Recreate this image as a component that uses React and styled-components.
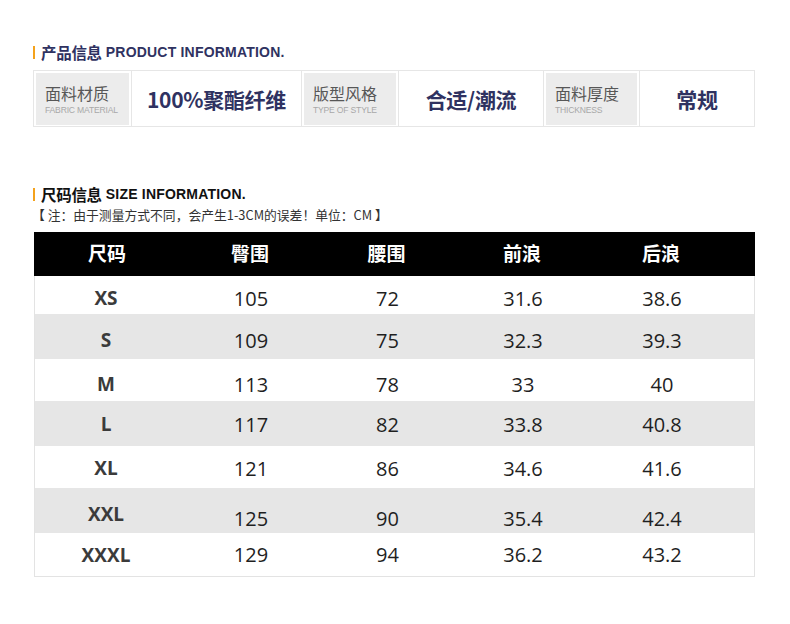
import { createGlobalStyle, styled } from "styled-components";

const GlobalStyle = createGlobalStyle`
  html, body {
    margin: 0;
    padding: 0;
    background: #ffffff;
  }
  body {
    font-family: "Noto Sans CJK SC", "Noto Sans", sans-serif;
  }
`;

const Page = styled.div`
  width: 790px;
  height: 624px;
  box-sizing: border-box;
  padding: 46px 35px 0 33px;
`;

const SectionTitle = styled.div`
  display: flex;
  align-items: center;
  height: 13px;
  line-height: 13px;
  border-left: 2px solid #f4a21c;
  padding-left: 6px;
  margin-top: ${(p) => p.$top || 0}px;
  color: ${(p) => p.$color};
  white-space: nowrap;
`;

const TitleCn = styled.span`
  font-family: "Noto Sans CJK SC", sans-serif;
  font-weight: 700;
  font-size: 15.5px;
  line-height: 13px;
  letter-spacing: -0.3px;
`;

const TitleEn = styled.span`
  font-family: "Liberation Sans", Arial, sans-serif;
  font-weight: 700;
  font-size: 14px;
  line-height: 13px;
  margin-left: 4px;
  letter-spacing: 0.2px;
`;

const InfoRow = styled.div`
  display: grid;
  grid-template-columns: 97px 170px 97px 145px 96px 1fr;
  height: 57px;
  margin-top: 11px;
  box-sizing: border-box;
  border: 1px solid #e6e6e6;
`;

const LabelCell = styled.div`
  padding: 2px 2px 1px 2px;
  border-left: ${(p) => (p.$first ? "none" : "1px solid #e6e6e6")};
  display: flex;
`;

const LabelBox = styled.div`
  flex: 1;
  background: #ececec;
  display: flex;
  flex-direction: column;
  justify-content: center;
  padding-left: 9px;
`;

const LabelCn = styled.div`
  font-family: "Noto Sans CJK SC", sans-serif;
  font-size: 16px;
  line-height: 18px;
  color: #575757;
`;

const LabelEn = styled.div`
  font-family: "Liberation Sans", Arial, sans-serif;
  font-size: 8.6px;
  line-height: 10px;
  margin-top: 3px;
  color: #a8a8a8;
  letter-spacing: -0.2px;
`;

const ValueCell = styled.div`
  border-left: 1px solid #e6e6e6;
  display: flex;
  align-items: center;
  justify-content: center;
  padding-top: 1px;
  font-family: "Noto Sans CJK SC", sans-serif;
  font-weight: 700;
  font-size: 21px;
  letter-spacing: -0.3px;
  color: #2f3261;
`;

const Note = styled.div`
  margin-top: 6px;
  margin-left: -1px;
  font-family: "Noto Sans CJK SC", sans-serif;
  font-size: 12.8px;
  line-height: 15px;
  color: #333333;
  white-space: nowrap;
`;

const SizeTable = styled.div`
  margin-top: 10px;
  margin-left: 1px;
  width: 721px;
  border-left: 1px solid #e3e3e3;
  border-right: 1px solid #e3e3e3;
  border-bottom: 1px solid #e3e3e3;
  box-sizing: border-box;
`;

const Row = styled.div`
  display: grid;
  grid-template-columns: 146px 140px 133px 138px 140px 1fr;
  height: ${(p) => p.$h}px;
  box-sizing: border-box;
  padding-top: ${(p) => p.$pad || 0}px;
  align-items: center;
  background: ${(p) => (p.$head ? "#000000" : p.$alt ? "#e6e6e6" : "#ffffff")};
  margin: ${(p) => (p.$head ? "0 -1px" : "0")};
`;

const HeadCell = styled.div`
  text-align: center;
  color: #ffffff;
  font-family: "Noto Sans CJK SC", sans-serif;
  font-weight: 700;
  font-size: 19px;
  margin-top: -3px;
`;

const SizeCell = styled.div`
  text-align: center;
  padding-right: 4px;
  font-family: "Open Sans", "Noto Sans", sans-serif;
  font-weight: 700;
  font-size: 19px;
  color: #3b3b3b;
  margin-top: ${(p) => p.$lift || 0}px;
`;

const NumCell = styled.div`
  text-align: center;
  font-family: "Open Sans", "Noto Sans", sans-serif;
  font-size: 20px;
  color: #1f1f1f;
`;

const info = [
  { cn: "面料材质", en: "FABRIC MATERIAL", value: "100%聚酯纤维" },
  { cn: "版型风格", en: "TYPE OF STYLE", value: "合适/潮流" },
  { cn: "面料厚度", en: "THICKNESS", value: "常规" },
];

const heads = ["尺码", "臀围", "腰围", "前浪", "后浪"];

const rows = [
  { size: "XS", vals: ["105", "72", "31.6", "38.6"], h: 38, pad: 6 },
  { size: "S", vals: ["109", "75", "32.3", "39.3"], h: 45, pad: 7, alt: true },
  { size: "M", vals: ["113", "78", "33", "40"], h: 42, pad: 8 },
  { size: "L", vals: ["117", "82", "33.8", "40.8"], h: 45, pad: 1, alt: true },
  { size: "XL", vals: ["121", "86", "34.6", "41.6"], h: 42, pad: 2 },
  { size: "XXL", vals: ["125", "90", "35.4", "42.4"], h: 45, pad: 16, lift: -10, alt: true },
  { size: "XXXL", vals: ["129", "94", "36.2", "43.2"], h: 43, pad: 0 },
];

export default function App() {
  return (
    <Page>
      <GlobalStyle />
      <SectionTitle $color="#2f3261">
        <TitleCn>产品信息</TitleCn>
        <TitleEn>PRODUCT INFORMATION.</TitleEn>
      </SectionTitle>

      <InfoRow>
        {info.map((item, i) => [
          <LabelCell key={item.cn} $first={i === 0}>
            <LabelBox>
              <LabelCn>{item.cn}</LabelCn>
              <LabelEn>{item.en}</LabelEn>
            </LabelBox>
          </LabelCell>,
          <ValueCell key={item.value}>{item.value}</ValueCell>,
        ])}
      </InfoRow>

      <SectionTitle $top={61} $color="#111111">
        <TitleCn>尺码信息</TitleCn>
        <TitleEn>SIZE INFORMATION.</TitleEn>
      </SectionTitle>
      <Note>【 注：由于测量方式不同，会产生1-3CM的误差！单位：CM 】</Note>

      <SizeTable>
        <Row $head $h={44}>
          {heads.map((h) => (
            <HeadCell key={h}>{h}</HeadCell>
          ))}
        </Row>
        {rows.map((r) => (
          <Row key={r.size} $h={r.h} $pad={r.pad} $alt={r.alt}>
            <SizeCell $lift={r.lift}>{r.size}</SizeCell>
            {r.vals.map((v, i) => (
              <NumCell key={i}>{v}</NumCell>
            ))}
          </Row>
        ))}
      </SizeTable>
    </Page>
  );
}
